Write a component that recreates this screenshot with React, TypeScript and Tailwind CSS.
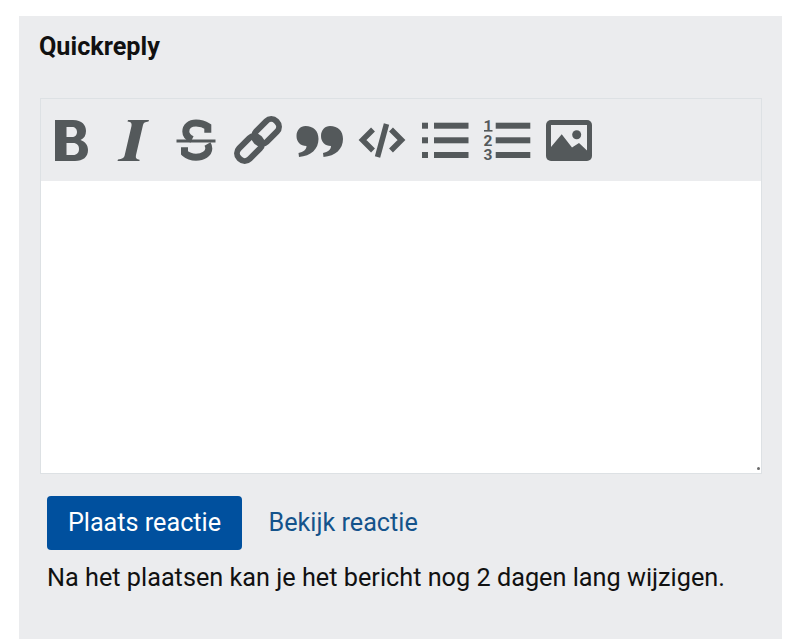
import React from "react";

const C = "#54595b";
const Bold = () => (
  <path fillRule="evenodd" fill={C} d="M8 4H26C35 4 39 9 39 15C39 19.5 37 22.5 33.5 24C38 25.5 41 29 41 34C41 41 36 45 28 45H8ZM19.5 11V21H25C28 21 30 19 30 16C30 13 28 11 25 11ZM19.5 27V39H26C30 39 32 36.5 32 33C32 29.5 30 27 26 27Z" />
);
const Italic = () => (
  <path fill={C} d="M19 4H40L39.5 5.5C36 6 34.5 6.5 34 9L27 39C26.5 42 27 43 31 44L30 45H8.5L9 43.5C13 43 15 42 15.5 40L22.5 10C23 7 22 6 18.5 5.5Z" />
);
const Strike = () => (
  <g>
    <rect x="4.5" y="23.5" width="39" height="3" fill={C} />
    <path fill="none" stroke={C} strokeWidth="7" d="M35.8 16.7V10.5C32 8 28 7 24 7C18 7 13.8 10.5 13.8 15.5C13.8 19 16 21.5 20 23.5" />
    <path fill="none" stroke={C} strokeWidth="7" d="M12.5 31.3V37C16 40 20 41.2 24 41.2C31 41.2 36.8 37.5 36.8 32.5C36.8 31 36.4 29.5 35.5 28" />
  </g>
);
const LinkIcon = () => (
  <g fill="none" stroke={C} strokeWidth="6">
    <rect x="18.25" y="8" width="28.5" height="15" rx="7" transform="rotate(-45 32.5 15.5)" />
    <rect x="1.25" y="25" width="28.5" height="15" rx="7" transform="rotate(-45 15.5 32.5)" />
  </g>
);
const Quote = () => (
  <g fill={C}>
    <path d="M9.5 10C17.5 10 22.5 15 22.5 23C22.5 33 15 40 3 41L2.5 37C7.5 36 10.5 33.5 10.5 30C4.5 30 0.5 26 0.5 20C0.5 14 4.5 10 9.5 10Z" />
    <path transform="translate(24.5 0)" d="M9.5 10C17.5 10 22.5 15 22.5 23C22.5 33 15 40 3 41L2.5 37C7.5 36 10.5 33.5 10.5 30C4.5 30 0.5 26 0.5 20C0.5 14 4.5 10 9.5 10Z" />
  </g>
);
const Code = () => (
  <g fill="none" stroke={C} strokeWidth="5.5">
    <path d="M15 13.5L4.5 24L15 34.5" />
    <path d="M28.5 8L19.5 41" />
    <path d="M33 13.5L43.5 24L33 34.5" />
  </g>
);
const Ul = () => (
  <g fill={C}>
    {[6.7, 21.3, 36].map((y) => (
      <g key={y}>
        <rect x="1" y={y} width="6" height="6" />
        <rect x="13" y={y} width="34.5" height="6" />
      </g>
    ))}
  </g>
);
const Ol = () => (
  <g fill={C}>
    {[6.7, 21.3, 36].map((y) => (
      <rect key={y} x="12.7" y={y} width="34.6" height="6" />
    ))}
    <text fontFamily="Roboto, sans-serif" fontWeight="700" fontSize="15.5" textAnchor="middle">
      <tspan x="5" y="15">1</tspan>
      <tspan x="5" y="29.5">2</tspan>
      <tspan x="5" y="44">3</tspan>
    </text>
    <rect x="1" y="14" width="8.5" height="1.6" />
  </g>
);
const Picture = () => (
  <g>
    <rect x="1" y="4" width="46" height="41" rx="5" fill={C} />
    <path fill="#ebecee" d="M6 9H42V34.5L34 27L27 31.5L16.7 18.3L6 31Z" />
    <circle cx="31.7" cy="18.7" r="4.5" fill={C} />
  </g>
);

const icons = [Bold, Italic, Strike, LinkIcon, Quote, Code, Ul, Ol, Picture];

export default function App() {
  return (
    <div className="h-[639px] w-[800px] overflow-hidden bg-white pl-[19px] pr-[18px] pt-4 font-['Roboto',sans-serif] text-[#111]">
      <div className="h-full bg-[#ebecee] pl-5 pr-5">
        <h2 className="pt-4 text-[25.2px] font-bold leading-[30px]">Quickreply</h2>
        <div className="ml-px mt-9 w-[722px]">
          <div className="flex h-[83px] items-center border-x border-t border-[#dde1e4]">
            <div className="-ml-[0.9px] flex">
              {icons.map((Icon, i) => (
                <span key={i} className="flex w-[62.25px] shrink-0 justify-center">
                  <svg width="48" height="48" viewBox="0 0 48 48" className="block"><Icon /></svg>
                </span>
              ))}
            </div>
          </div>
          <div className="relative h-[293px] border-x border-b border-[#dde1e4] bg-white">
            <span className="absolute bottom-[3px] right-px h-[3px] w-[3px] rounded-full bg-[#6a6a6a]" />
          </div>
        </div>
        <div className="ml-2 mt-[22px] flex items-center">
          <button className="h-[54px] w-[195px] rounded bg-[#00509e] text-[25.2px] text-white">Plaats reactie</button>
          <a className="ml-[26.5px] text-[25.2px] text-[#14538b]">Bekijk reactie</a>
        </div>
        <p className="ml-2 mt-3 text-[25.25px] leading-[32px]">Na het plaatsen kan je het bericht nog 2 dagen lang wijzigen.</p>
      </div>
    </div>
  );
}
